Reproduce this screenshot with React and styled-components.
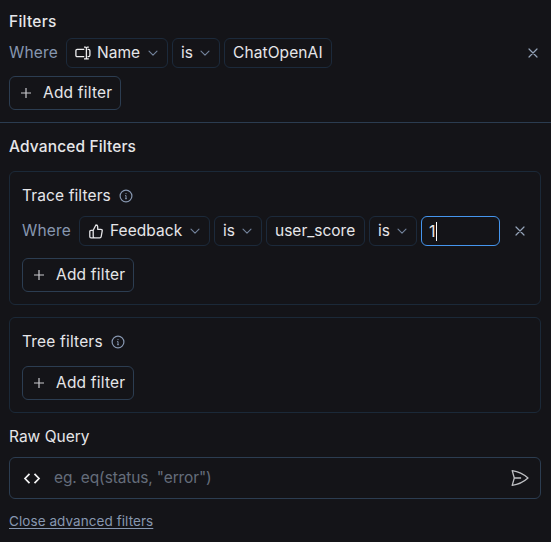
import React from "react";
import styled, { createGlobalStyle } from "styled-components";

const Global = createGlobalStyle`
  * { box-sizing: border-box; }
  body { margin: 0; background: #141418; font-family: Inter, "Public Sans", sans-serif; font-size: 16px; color: #e6e6e9; }
`;

const Panel = styled.main`
  width: 551px;
  height: 542px;
  overflow: hidden;
  background: #141418;
`;
const FilterSection = styled.section`
  height: 123px;
  padding: 11px 9px 0;
  border-bottom: 1px solid #2b3c50;
`;
const AdvancedSection = styled.section`
  padding: 13px 10px 0 9px;
`;
const Heading = styled.h2`
  display: flex;
  align-items: center;
  gap: 8px;
  margin: ${(p) => p.$top || 0}px 0 0;
  height: 22px;
  font-size: 15.5px;
  line-height: 22px;
  font-weight: ${(p) => p.$weight || 400};
`;
const Label = styled.span`
  white-space: nowrap;
  letter-spacing: ${(p) => p.$track || 0}px;
`;
const Row = styled.div`
  display: flex;
  align-items: center;
  gap: 4px;
  height: 30px;
  margin-top: ${(p) => p.$top}px;
`;
const Where = styled.span`
  width: 53px;
  padding-bottom: 1px;
  font-size: 15.5px;
  color: #8797b0;
`;
const Chip = styled.div`
  display: flex;
  align-items: center;
  width: ${(p) => p.$width}px;
  height: 30px;
  padding: 0 9px 0 8px;
  border: 1px solid #1c2a3b;
  border-radius: 6px;
  font-size: 15.5px;

  > span { padding-bottom: 1px; }
  > svg:first-child { margin-right: ${(p) => p.$iconGap || 6}px; }
  > svg:last-child { margin-left: auto; }
`;
const ValueInput = styled.div`
  display: flex;
  align-items: center;
  width: 79px;
  height: 30px;
  padding-left: 7px;
  border: 1px solid #4595ee;
  border-radius: 6px;
  font-size: 16px;
`;
const Caret = styled.i`
  width: 1px;
  height: 19px;
  background: #fff;
`;
const CloseButton = styled.button`
  display: flex;
  margin: 0 ${(p) => p.$inset}px 0 auto;
  padding: 0;
  border: 0;
  background: none;
`;
const AddButton = styled.button`
  display: flex;
  align-items: center;
  gap: 11px;
  width: 112px;
  height: 34px;
  margin: ${(p) => p.$top}px 0 0;
  padding: 0 0 1px 10px;
  border: 1px solid #2c3d51;
  border-radius: 6px;
  background: none;
  color: inherit;
  font: inherit;
  font-size: 15.5px;
`;
const Card = styled.section`
  height: ${(p) => p.$height}px;
  margin-top: ${(p) => p.$top}px;
  padding: 13px 12px;
  border: 1px solid #1b2938;
  border-radius: 6px;
`;
const QueryBox = styled.div`
  display: flex;
  align-items: center;
  height: 42px;
  margin: 9px 0 13px;
  padding: 0 11px 0 13px;
  border: 1px solid #2c3d51;
  border-radius: 6px;
  font-size: 15.5px;
  color: #656d7b;

  > span { padding-bottom: 1px; }
  > svg:first-child { margin-right: 13px; }
  > svg:last-child { margin-left: auto; }
`;
const CloseLink = styled.a`
  display: block;
  height: 18px;
  line-height: 18px;
  font-size: 13.5px;
  color: #8797b0;
  text-decoration: underline;
  text-underline-offset: 2px;
`;

const Chevron = () => (
  <svg width="10" height="10" viewBox="0 0 10 10" fill="none" stroke="#74849d" strokeWidth="1.1" strokeLinecap="round" strokeLinejoin="round">
    <path d="m1 3.2 4 4 4-4" />
  </svg>
);
const Cross = () => (
  <svg width="10" height="10" viewBox="0 0 10 10" fill="none" stroke="#94a3b8" strokeWidth="1.2" strokeLinecap="round">
    <path d="m1 1 8 8M9 1 1 9" />
  </svg>
);
const Plus = () => (
  <svg width="12" height="12" viewBox="0 0 12 12" fill="none" stroke="#c9c9cd" strokeWidth="1.2">
    <path d="M6 1v10M1 6h10" />
  </svg>
);
const Info = () => (
  <svg width="14" height="14" viewBox="0 0 14 14" fill="none" stroke="#8797b0" strokeWidth="1.2">
    <circle cx="7" cy="7" r="5.9" />
    <path d="M6.2 6.5H7v3.2M6.1 9.7h1.8M7 4.1v1" strokeWidth="1" />
  </svg>
);
const NameIcon = () => (
  <svg width="16" height="16" viewBox="0 0 16 16" fill="none" stroke="#ececee" strokeWidth="1.3">
    <path d="M9.3 4.3H2.2a1.3 1.3 0 0 0-1.3 1.3v4.8a1.3 1.3 0 0 0 1.3 1.3h7.1M9 2.1h1.2c.7 0 1.2.4 1.2 1v9.8c0 .6-.5 1-1.2 1H9M13.8 2.1h-1.2c-.7 0-1.2.4-1.2 1M11.4 12.9c0 .6.5 1 1.2 1h1.2M12.6 4.3h.8c.9 0 1.5.6 1.5 1.4v4.6c0 .8-.6 1.4-1.5 1.4h-.8" />
  </svg>
);
const Thumb = () => (
  <svg width="15" height="15" viewBox="0 0 15 15" fill="none" stroke="#e6e6e9" strokeWidth="1.3" strokeLinejoin="round">
    <path d="M5.2 6.2 7.9 1c1.1 0 1.8.7 1.8 1.7v2.6h3.2c.9 0 1.5.7 1.3 1.6l-1 5.6c-.1.8-.7 1.3-1.5 1.3h-5c-.9 0-1.5-.6-1.5-1.5ZM5.2 6.4H3c-.7 0-1.2.5-1.2 1.2v5c0 .7.5 1.2 1.2 1.2h3.5" />
  </svg>
);
const Code = () => (
  <svg width="18" height="14" viewBox="0 0 18 14" fill="none" stroke="#f3f3f4" strokeWidth="1.7">
    <path d="M6.5 2.8 2 7.5l4.5 4.7M11.5 2.8 16 7.5l-4.5 4.7" />
  </svg>
);
const Send = () => (
  <svg width="18" height="18" viewBox="0 0 18 18" fill="none" stroke="#bfc0c4" strokeWidth="1.3" strokeLinejoin="round">
    <path d="M3.3 9 1.2 1.6A30 30 0 0 1 17 9 30 30 0 0 1 1.2 16.4L3.3 9Zm0 0h6.8" />
  </svg>
);

const AddFilter = ({ top }) => (
  <AddButton $top={top}>
    <Plus />
    <Label $track={0.2}>Add filter</Label>
  </AddButton>
);
const Operator = () => (
  <Chip $width={48}>
    <Label>is</Label>
    <Chevron />
  </Chip>
);

export default function App() {
  return (
    <Panel>
      <Global />
      <FilterSection>
        <Heading $weight={450}><Label $track={0.25}>Filters</Label></Heading>
        <Row $top={5}>
          <Where><Label $track={0.15}>Where</Label></Where>
          <Chip $width={102}>
            <NameIcon />
            <Label>Name</Label>
            <Chevron />
          </Chip>
          <Operator />
          <Chip $width={108}><Label $track={0.1}>ChatOpenAI</Label></Chip>
          <CloseButton $inset={4} aria-label="Remove filter"><Cross /></CloseButton>
        </Row>
        <AddFilter top={8} />
      </FilterSection>
      <AdvancedSection>
        <Heading $weight={450}><Label $track={0.13}>Advanced Filters</Label></Heading>
        <Card $height={134} $top={13}>
          <Heading><Label $track={0.12}>Trace filters</Label><Info /></Heading>
          <Row $top={9}>
            <Where><Label $track={0.15}>Where</Label></Where>
            <Chip $width={131} $iconGap={7}>
              <Thumb />
              <Label $track={0.05}>Feedback</Label>
              <Chevron />
            </Chip>
            <Operator />
            <Chip $width={99}><Label>user_score</Label></Chip>
            <Operator />
            <ValueInput>1<Caret /></ValueInput>
            <CloseButton $inset={3} aria-label="Remove trace filter"><Cross /></CloseButton>
          </Row>
          <AddFilter top={12} />
        </Card>
        <Card $height={96} $top={12}>
          <Heading><Label $track={0.18}>Tree filters</Label><Info /></Heading>
          <AddFilter top={13} />
        </Card>
        <Heading $top={13}><Label>Raw Query</Label></Heading>
        <QueryBox>
          <Code />
          <Label $track={-0.13}>eg. eq(status, "error")</Label>
          <Send />
        </QueryBox>
        <CloseLink><Label $track={0.07}>Close advanced filters</Label></CloseLink>
      </AdvancedSection>
    </Panel>
  );
}
